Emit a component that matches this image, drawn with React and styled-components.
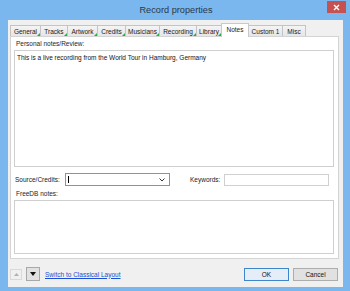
import React from "react";
import styled, { createGlobalStyle, css } from "styled-components";

const Global = createGlobalStyle`
  html, body { margin: 0; padding: 0; background: #78b6ee; }
  body { font-family: "Liberation Sans", Arial, sans-serif; }
  * { box-sizing: border-box; }
`;

const Window = styled.div`
  position: relative;
  width: 350px;
  height: 291px;
  background: #7ab7ef;
  display: flex;
  flex-direction: column;
  padding: 0 7px 4px 8px;
`;

const TitleBar = styled.div`
  height: 20px;
  display: flex;
  align-items: center;
  justify-content: center;
  font-size: 9.2px;
  color: #2a3746;
  padding-bottom: 1px;
  margin-right: -1px;
`;

const CloseButton = styled.div`
  position: absolute;
  top: 1px;
  right: 4px;
  width: 19px;
  height: 12px;
  background: #c75050;
  color: #fff;
  display: flex;
  align-items: center;
  justify-content: center;
`;

const Client = styled.div`
  flex: 1;
  background: #f0f0f0;
  display: flex;
  flex-direction: column;
  padding: 3px 4px 0 2px;
  font-size: 6.5px;
  color: #1a1a1a;
`;

const TabStrip = styled.div`
  display: flex;
  align-items: flex-end;
  height: 13px;
  position: relative;
  z-index: 1;
`;

const Tab = styled.div`
  position: relative;
  width: ${(p) => p.$w}px;
  height: 11px;
  display: flex;
  align-items: center;
  justify-content: center;
  border: 1px solid #c4c4c4;
  border-bottom: none;
  margin-right: -1px;
  background: linear-gradient(#f4f4f4, #e6e6e6);
  color: #1a1a1a;
  white-space: nowrap;
  ${(p) =>
    p.$active &&
    css`
      height: 14px;
      margin-bottom: -1px;
      background: #fff;
      border-color: #c9c9c9;
      padding-bottom: 2px;
      z-index: 2;
    `}
  ${(p) =>
    p.$mark &&
    css`
      &::after {
        content: "";
        position: absolute;
        right: 0px;
        bottom: 0px;
        width: 0;
        height: 0;
        border-left: 3px solid transparent;
        border-bottom: 3px solid #1fb141;
      }
    `}
`;

const Panel = styled.div`
  height: 223px;
  background: #fff;
  border: 1px solid #d4d4d4;
  display: flex;
  flex-direction: column;
  padding: 3px 4px 4px 3px;
`;

const Label = styled.div`
  height: 8px;
  line-height: 8px;
  padding-left: ${(p) => p.$pl ?? 2}px;
  margin-top: ${(p) => p.$mt ?? 0}px;
  color: #1e1e1e;
  white-space: nowrap;
`;

const TextBox = styled.div`
  height: ${(p) => p.$h}px;
  margin-top: 2px;
  border: 1px solid #cfcfcf;
  background: #fff;
  padding: 3px 2px;
  line-height: 8px;
  color: #111;
  white-space: nowrap;
`;

const FieldRow = styled.div`
  display: flex;
  align-items: center;
  height: 13px;
  margin-top: 6px;
`;

const RowLabel = styled.div`
  width: ${(p) => p.$w}px;
  margin-left: ${(p) => p.$ml ?? 0}px;
  padding-left: 1px;
  white-space: nowrap;
`;

const Combo = styled.div`
  width: 105px;
  height: 13px;
  border: 1px solid #5a9ee6;
  background: #fff;
  display: flex;
  align-items: center;
  justify-content: space-between;
  padding: 0 4px 0 2px;
`;

const Caret = styled.span`
  width: 1px;
  height: 7px;
  background: #000;
`;

const Input = styled.div`
  width: 105px;
  height: 12px;
  border: 1px solid #d0d0d0;
  background: #fff;
`;

const BottomBar = styled.div`
  flex: 1;
  display: flex;
  align-items: center;
  padding: 2px 0 0 0;
  margin-right: 1px;
`;

const ArrowButton = styled.div`
  width: ${(p) => (p.$disabled ? 12 : 14)}px;
  height: ${(p) => (p.$disabled ? 11 : 14)}px;
  margin-right: ${(p) => p.$mr}px;
  display: flex;
  align-items: center;
  justify-content: center;
  border: 1px solid ${(p) => (p.$disabled ? "#d9d9d9" : "#a8a8a8")};
  background: ${(p) => (p.$disabled ? "#f0f0f0" : "#e1e1e1")};
`;

const Link = styled.a`
  color: #1a4fd6;
  text-decoration: underline;
  white-space: nowrap;
  cursor: pointer;
`;

const Spacer = styled.div`
  flex: 1;
`;

const Button = styled.div`
  width: 45px;
  height: 13px;
  display: flex;
  align-items: center;
  justify-content: center;
  margin-left: ${(p) => p.$ml ?? 0}px;
  border: 1px solid ${(p) => (p.$primary ? "#3d86cc" : "#adadad")};
  background: ${(p) => (p.$primary ? "#e5eef8" : "#e1e1e1")};
  color: #111;
`;

const tabs = [
  { label: "General", w: 31, mark: true },
  { label: "Tracks", w: 28, mark: true },
  { label: "Artwork", w: 31, mark: true },
  { label: "Credits", w: 29, mark: true },
  { label: "Musicians", w: 35, mark: true },
  { label: "Recording", w: 38, mark: true },
  { label: "Library", w: 26, mark: true },
  { label: "Notes", w: 28, active: true },
  { label: "Custom 1", w: 35 },
  { label: "Misc", w: 24 },
];

export default function App() {
  return (
    <>
      <Global />
      <Window>
        <TitleBar>Record properties</TitleBar>
        <CloseButton>
          <svg width="7" height="7" viewBox="0 0 7 7">
            <path d="M1 1 L6 6 M6 1 L1 6" stroke="#fff" strokeWidth="1.4" />
          </svg>
        </CloseButton>
        <Client>
          <TabStrip>
            {tabs.map((t) => (
              <Tab key={t.label} $w={t.w} $active={t.active} $mark={t.mark}>
                {t.label}
              </Tab>
            ))}
          </TabStrip>
          <Panel>
            <Label>Personal notes/Review:</Label>
            <TextBox $h={117}>
              This is a live recording from the World Tour in Hamburg, Germany
            </TextBox>
            <FieldRow>
              <RowLabel $w={51}>Source/Credits:</RowLabel>
              <Combo>
                <Caret />
                <svg width="6" height="4" viewBox="0 0 6 4">
                  <path d="M0.5 0.5 L3 3 L5.5 0.5" stroke="#333" strokeWidth="1" fill="none" />
                </svg>
              </Combo>
              <RowLabel $w={35} $ml={19}>Keywords:</RowLabel>
              <Input />
            </FieldRow>
            <Label $mt={4}>FreeDB notes:</Label>
            <TextBox $h={54} />
          </Panel>
          <BottomBar>
            <ArrowButton $disabled $mr={4}>
              <svg width="5" height="3" viewBox="0 0 5 3">
                <path d="M0 3 L2.5 0 L5 3 Z" fill="#b0b0b0" />
              </svg>
            </ArrowButton>
            <ArrowButton $mr={5}>
              <svg width="6" height="4" viewBox="0 0 6 4">
                <path d="M0 0 L6 0 L3 4 Z" fill="#111" />
              </svg>
            </ArrowButton>
            <Link>Switch to Classical Layout</Link>
            <Spacer />
            <Button $primary>OK</Button>
            <Button $ml={4}>Cancel</Button>
          </BottomBar>
        </Client>
      </Window>
    </>
  );
}
